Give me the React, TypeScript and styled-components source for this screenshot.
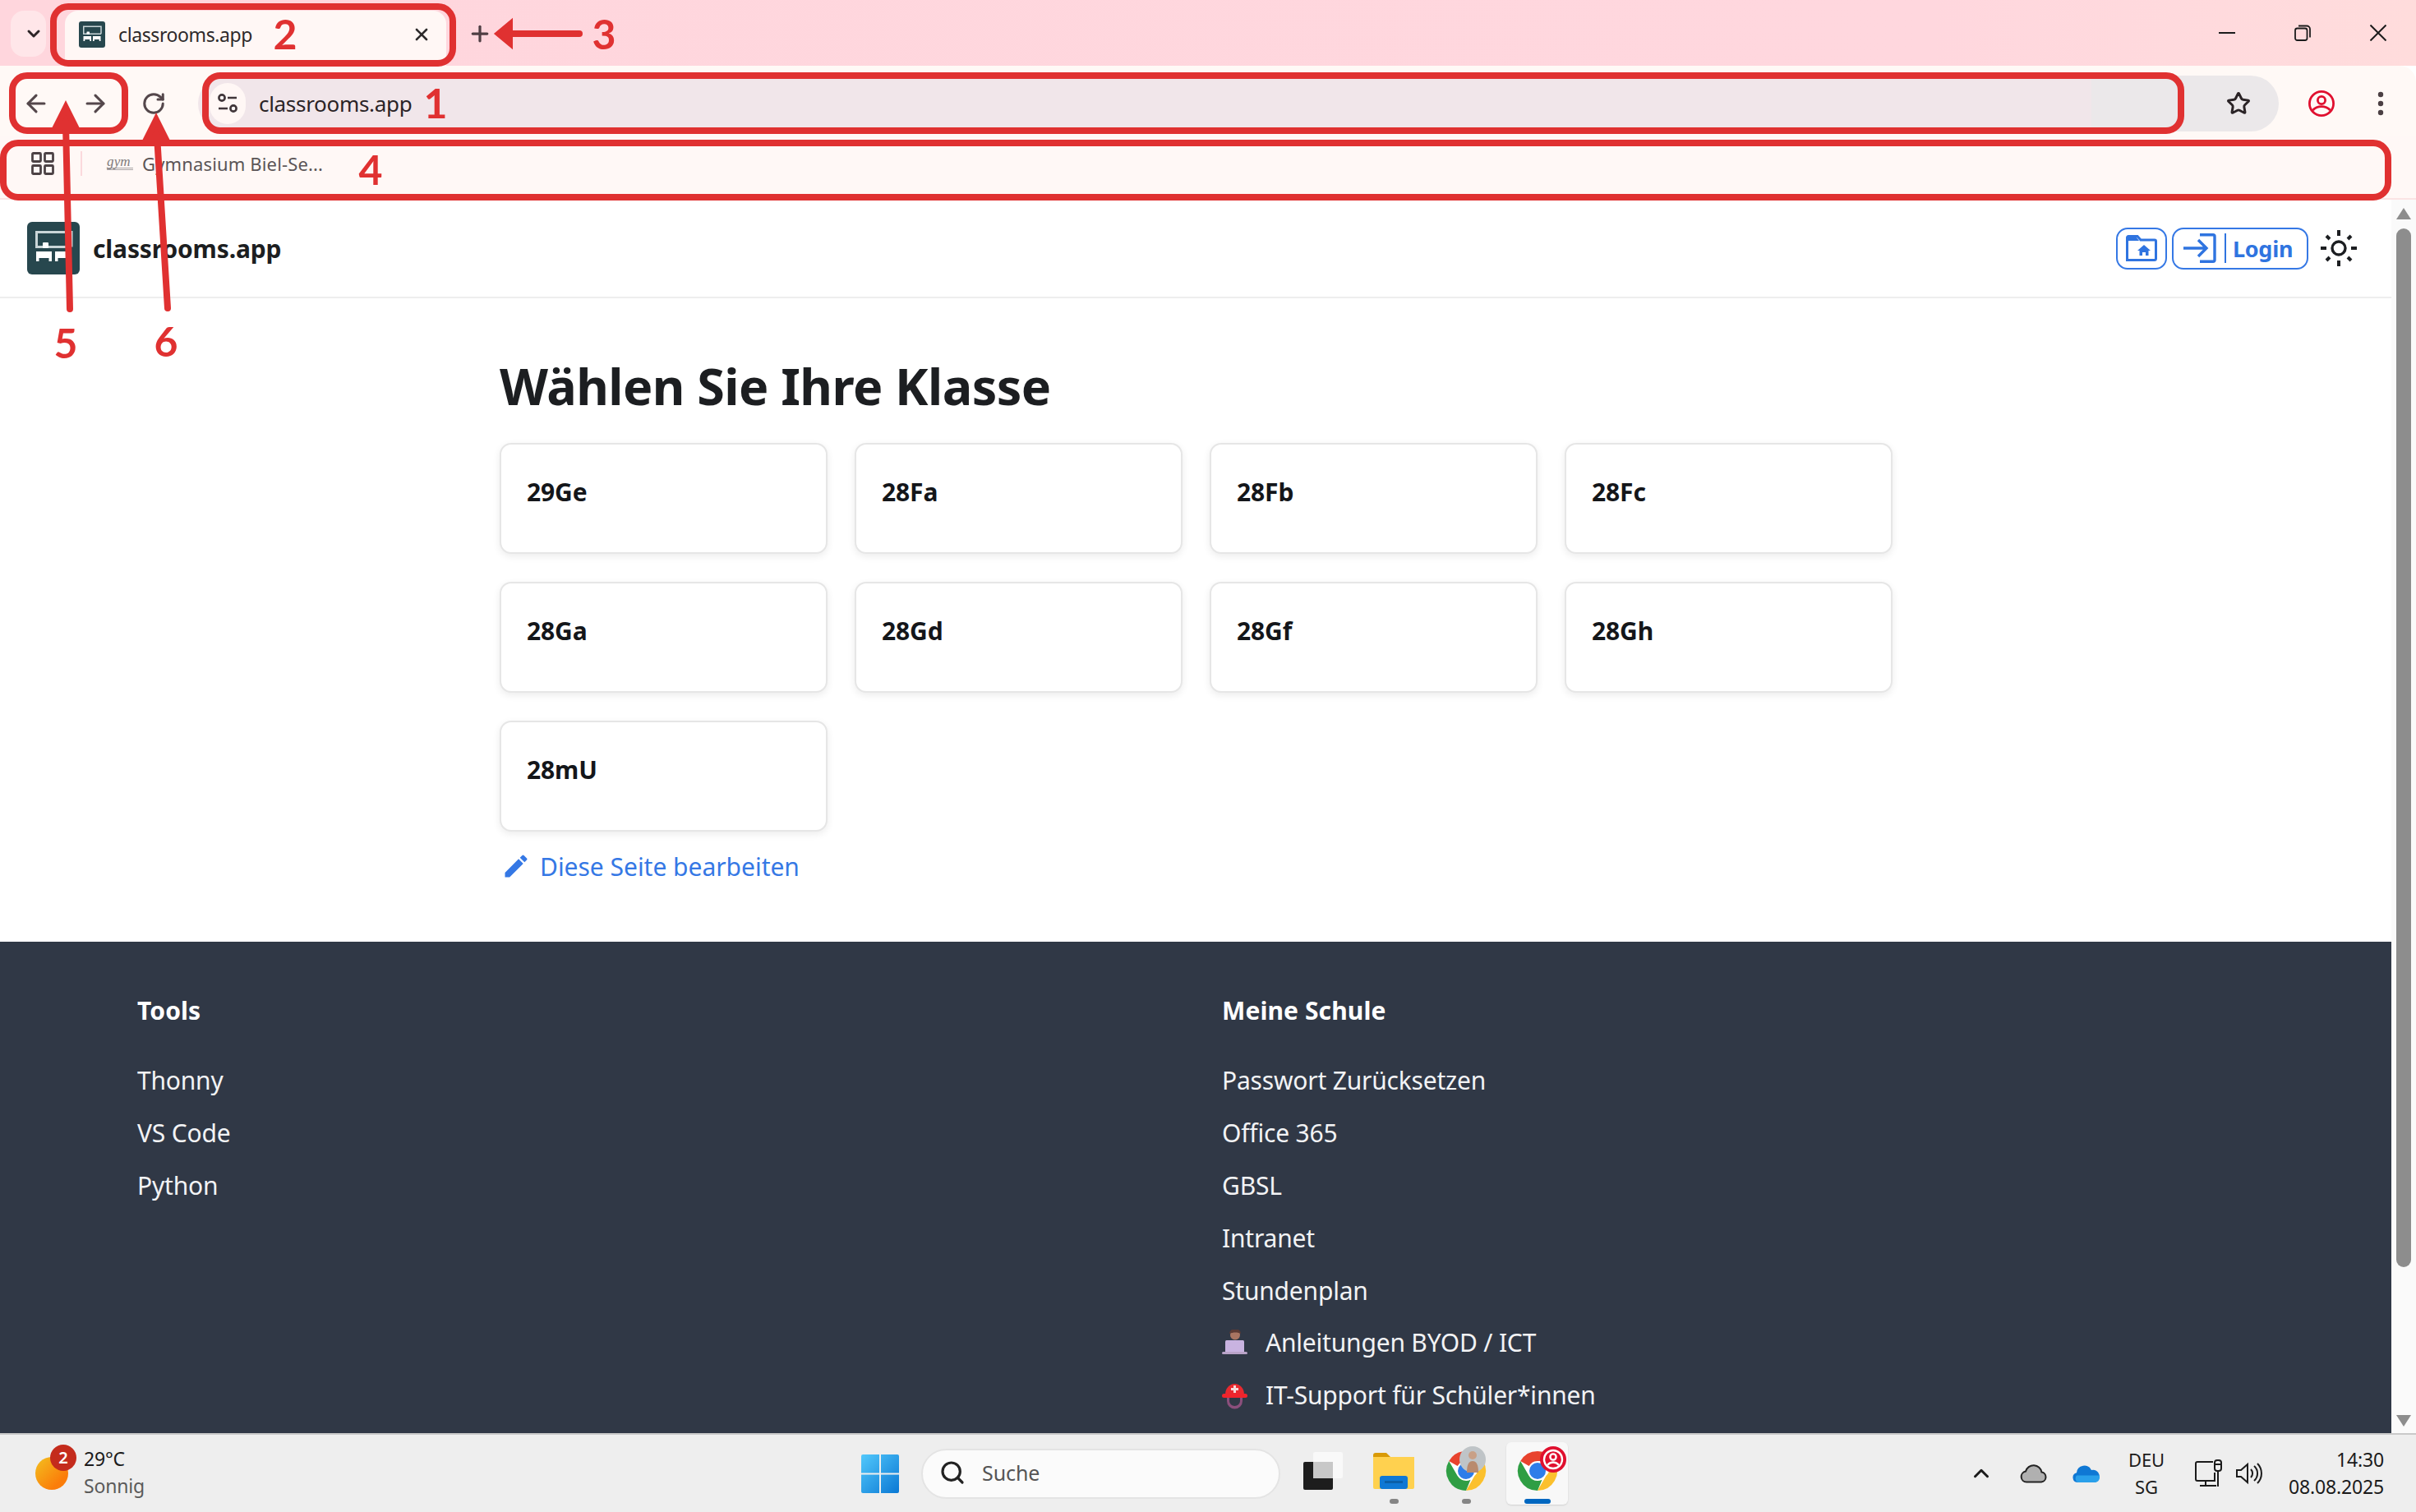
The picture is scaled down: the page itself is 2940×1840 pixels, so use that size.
import * as React from "react";
import styled, { createGlobalStyle } from "styled-components";
import {
  ArrowLeft,
  ArrowRight,
  ChevronDown,
  ChevronUp,
  Plus,
  RotateCw,
  Search,
  Star,
  X,
} from "lucide-react";
import { MdEdit } from "react-icons/md";

const Global = createGlobalStyle`
  html, body {
    margin: 0;
    padding: 0;
    background: #fff;
  }
  * { box-sizing: border-box; }
`;

const Screen = styled.div`
  position: relative;
  width: 2940px;
  height: 1840px;
  display: flex;
  flex-direction: column;
  overflow: hidden;
  font-family: "Noto Sans", "Open Sans", sans-serif;
`;

/* browser chrome */
const TabStrip = styled.div`
  height: 80px;
  flex: none;
  display: flex;
  align-items: flex-start;
  padding: 13px 36px 0 13px;
  background: linear-gradient(90deg, #ffd6dd 0%, #ffd7de 80%, #ffdcdc 100%);
`;

const TabMenu = styled.div`
  width: 43px;
  height: 56px;
  flex: none;
  padding-left: 12px;
  border-radius: 16px;
  background: #ffe6e9;
  color: #2c2426;
  display: flex;
  align-items: center;
  justify-content: center;
`;

const Tab = styled.div`
  width: 464px;
  height: 67px;
  margin-left: 23px;
  flex: none;
  display: flex;
  align-items: center;
  padding: 0 18px 10px 17px;
  border-radius: 16px 16px 0 0;
  background: #fff7f5;
  color: #2d2a2b;
  font-size: 23px;
  letter-spacing: -0.4px;
`;

const TabTitle = styled.span`
  margin-left: 16px;
  flex: 1;
`;

const NewTab = styled.div`
  margin: 13px 0 0 26px;
  color: #4f3f44;
  display: flex;
`;

const WindowControls = styled.div`
  margin: 17px 0 0 auto;
  display: flex;
  align-items: center;
  gap: 72px;
  color: #1c1c1c;
`;

const Toolbar = styled.div`
  height: 86px;
  flex: none;
  display: flex;
  align-items: center;
  background: #fff9f6;
  border-radius: 0 20px 0 0;
  padding: 6px 28px 0 27px;
  color: #54474b;
`;

const NavIcons = styled.div`
  display: flex;
  align-items: center;
  gap: 38px;
`;

const Reload = styled.div`
  display: flex;
  margin-left: 39px;
`;

const Omnibox = styled.div`
  width: 2532px;
  height: 68px;
  margin-left: 39px;
  flex: none;
  display: flex;
  align-items: center;
  padding: 0 34px 0 14px;
  border-radius: 34px;
  background: linear-gradient(90deg, #f1e6ea 0%, #f1e6ea 91%, #ebe8ea 91%);
  color: #2a2326;
  font-size: 26px;
  letter-spacing: -0.3px;
`;

const SiteInfo = styled.div`
  width: 44px;
  height: 50px;
  border-radius: 25px;
  background: #fff7f5;
  display: flex;
  align-items: center;
  justify-content: center;
  flex: none;
`;

const Address = styled.span`
  margin-left: 16px;
  flex: 1;
`;

const ToolbarEnd = styled.div`
  margin-left: 35px;
  display: flex;
  align-items: center;
  gap: 51px;
`;

const Bookmarks = styled.div`
  height: 77px;
  flex: none;
  display: flex;
  align-items: center;
  padding: 0 0 10px 38px;
  background: #fff8f6;
  border-bottom: 2px solid #fbe4e4;
  color: #5b5557;
  font-size: 22px;
  letter-spacing: 0.15px;
`;

const BarDivider = styled.div`
  width: 2px;
  height: 30px;
  margin: 0 30px 0 32px;
  background: #fbd9dc;
`;

const GymMark = styled.span`
  width: 32px;
  margin-right: 11px;
  font-family: "Liberation Serif", serif;
  font-style: italic;
  font-size: 17px;
  line-height: 14px;
  color: #807b7c;
  border-bottom: 3px double #a9a5a6;
`;

/* page */
const Viewport = styled.div`
  flex: 1;
  min-height: 0;
  display: flex;
`;

const Page = styled.div`
  flex: 1;
  min-width: 0;
  overflow: hidden;
  background: #fff;
  color: #1c1e21;
`;

const NavBar = styled.nav`
  height: 120px;
  display: flex;
  align-items: center;
  padding: 0 42px 0 33px;
  border-bottom: 2px solid #eeeeee;
`;

const Brand = styled.div`
  margin-left: 16px;
  font-size: 30px;
  font-weight: 700;
  letter-spacing: -0.15px;
  color: #1c1e21;
`;

const NavRight = styled.div`
  margin-left: auto;
  display: flex;
  align-items: center;
`;

const OutlineButton = styled.div`
  height: 51px;
  margin-right: 6px;
  display: flex;
  align-items: center;
  border: 2px solid #3578e5;
  border-radius: 14px;
  color: #2f74e0;
  font-size: 27px;
  font-weight: 700;
  letter-spacing: -0.3px;
`;

const HomeButton = styled(OutlineButton)`
  width: 62px;
  justify-content: center;
`;

const LoginButton = styled(OutlineButton)`
  width: 166px;
  padding-left: 12px;
`;

const LoginSplit = styled.span`
  width: 2px;
  height: 36px;
  margin: 0 8px 0 10px;
  background: #2f74e0;
`;

const ThemeToggle = styled.div`
  display: flex;
  margin-left: 9px;
`;

const Content = styled.main`
  height: 783px;
  padding: 68px 0 0 608px;
`;

const Heading = styled.h1`
  margin: 0;
  font-size: 61px;
  line-height: 78px;
  font-weight: 700;
  letter-spacing: -0.55px;
  color: #1c1e21;
`;

const ClassGrid = styled.div`
  margin-top: 30px;
  display: grid;
  grid-template-columns: repeat(4, 399px);
  grid-auto-rows: 135px;
  column-gap: 33px;
  row-gap: 34px;
`;

const ClassCard = styled.div`
  padding: 38px 31px;
  border: 2px solid #e6e6e6;
  border-radius: 14px;
  background: #fff;
  box-shadow: 0 3px 10px rgba(0, 0, 0, 0.08);
  font-size: 30px;
  line-height: 40px;
  font-weight: 700;
  letter-spacing: -0.1px;
  color: #14161a;
`;

const EditLink = styled.div`
  margin-top: 21px;
  padding-left: 2px;
  display: flex;
  align-items: center;
  gap: 11px;
  height: 42px;
  font-size: 30px;
  letter-spacing: -0.02px;
  color: #3578e5;
`;

const Footer = styled.footer`
  height: 600px;
  background: #303846;
  color: #f2f3f5;
  padding: 62px 0 0 167px;
  display: grid;
  grid-template-columns: 1320px 1fr;
`;

const FooterColumn = styled.div`
  display: flex;
  flex-direction: column;
`;

const FooterTitle = styled.div`
  height: 44px;
  margin-bottom: 31px;
  line-height: 44px;
  font-size: 30px;
  font-weight: 700;
  letter-spacing: 0.1px;
  color: #fff;
`;

const FooterLink = styled.div`
  height: 63.8px;
  display: flex;
  align-items: center;
  gap: 22px;
  font-size: 30px;
  letter-spacing: -0.2px;
`;

const Scrollbar = styled.div`
  width: 30px;
  flex: none;
  display: flex;
  flex-direction: column;
  align-items: center;
  background: #fafafa;
  padding-top: 10px;
`;

const ScrollThumb = styled.div`
  width: 18px;
  height: 1264px;
  margin-top: 11px;
  border-radius: 9px;
  background: #8d8d8d;
`;

const ScrollDown = styled.div`
  margin-top: auto;
  margin-bottom: 8px;
  display: flex;
`;

/* taskbar */
const Taskbar = styled.div`
  height: 96px;
  flex: none;
  display: flex;
  align-items: center;
  background: #eeeeee;
  border-top: 2px solid #c9c9c9;
  font-family: "Noto Sans", "Open Sans", sans-serif;
  color: #1b1b1b;
`;

const Weather = styled.div`
  width: 1048px;
  flex: none;
  padding-left: 43px;
  display: flex;
  align-items: center;
`;

const SunDisc = styled.div`
  position: relative;
  width: 40px;
  height: 40px;
  flex: none;
  border-radius: 50%;
  background: linear-gradient(135deg, #f3c01f 0%, #fb7d0a 75%);
`;

const WeatherBadge = styled.span`
  position: absolute;
  top: -15px;
  left: 18px;
  width: 32px;
  height: 32px;
  border-radius: 50%;
  background: #c42b1c;
  color: #fff;
  font-size: 20px;
  font-weight: 600;
  line-height: 32px;
  text-align: center;
`;

const WeatherText = styled.div`
  margin: 0 0 3px 19px;
  font-size: 23px;
  line-height: 33px;
  letter-spacing: -0.2px;
`;

const Muted = styled.div`
  color: #5a5a5a;
`;

const SearchBox = styled.div`
  width: 437px;
  height: 61px;
  margin-left: 27px;
  flex: none;
  display: flex;
  align-items: center;
  padding: 0 0 2px 20px;
  border-radius: 31px;
  border: 2px solid #e4e4e4;
  background: #fbfbfb;
  font-size: 25px;
  color: #555;
  letter-spacing: -0.1px;
`;

const SearchLabel = styled.span`
  margin-left: 20px;
`;

const AppSlot = styled.div<{ $ml: number; $active?: boolean }>`
  position: relative;
  width: ${(p) => (p.$active ? 75 : 52)}px;
  height: 76px;
  margin-left: ${(p) => p.$ml}px;
  flex: none;
  display: flex;
  align-items: center;
  justify-content: center;
  padding-bottom: 6px;
  border-radius: 6px;
  background: ${(p) => (p.$active ? "#f8f8f8" : "transparent")};
  box-shadow: ${(p) => (p.$active ? "0 1px 2px rgba(0,0,0,.12)" : "none")};
`;

const RunDot = styled.span`
  position: absolute;
  bottom: 1px;
  left: 50%;
  width: 11px;
  height: 6px;
  margin-left: -5px;
  border-radius: 3px;
  background: #858585;
`;

const ActiveBar = styled.span`
  position: absolute;
  bottom: 1px;
  left: 22px;
  width: 32px;
  height: 6px;
  border-radius: 3px;
  background: #0067c0;
`;

const AppBadge = styled.span`
  position: absolute;
  top: 5px;
  right: 2px;
  display: flex;
`;

const Tray = styled.div`
  margin-left: auto;
  padding-right: 39px;
  display: flex;
  align-items: center;
`;

const TrayItem = styled.div<{ $ml: number }>`
  margin-left: ${(p) => p.$ml}px;
  display: flex;
  align-items: center;
`;

const TrayLang = styled.div`
  margin-left: 33px;
  width: 48px;
  font-size: 22px;
  line-height: 33px;
  text-align: center;
  letter-spacing: -0.2px;
`;

const Clock = styled.div`
  margin-left: 32px;
  font-size: 23px;
  line-height: 33px;
  text-align: right;
  letter-spacing: -0.15px;
`;

/* red markup drawn over the screenshot */
const MarkBox = styled.div<{ $x: number; $y: number; $w: number; $h: number }>`
  position: absolute;
  left: ${(p) => p.$x}px;
  top: ${(p) => p.$y}px;
  width: ${(p) => p.$w}px;
  height: ${(p) => p.$h}px;
  border: 8px solid #e03131;
  border-radius: 22px;
  pointer-events: none;
`;

const MarkDigit = styled.span<{ $x: number; $y: number }>`
  position: absolute;
  left: ${(p) => p.$x}px;
  top: ${(p) => p.$y}px;
  width: 40px;
  margin: -30px 0 0 -20px;
  font-family: "Lato", sans-serif;
  font-size: 50px;
  line-height: 60px;
  font-weight: 700;
  text-align: center;
  color: #e03131;
`;

const MarkArrows = styled.svg`
  position: absolute;
  left: 0;
  top: 0;
  pointer-events: none;
`;

const AppLogo = ({ size }: { size: number }) => (
  <svg width={size} height={size} viewBox="0 0 64 64" style={{ flex: "none" }}>
    <rect width="64" height="64" rx="6" fill="#27474e" />
    <path d="M54 30.500H11.500V12.500H54V30.500" fill="none" stroke="#c9d5d7" strokeWidth="3" />
    <rect x="19" y="25" width="7" height="7" rx="1" fill="#fff" />
    <path d="M11 36h19v12h-3.500v-4h-12v4H11zM34 36h19v12h-3.500v-4h-12v4H34z" fill="#fff" />
  </svg>
);

const TuneIcon = () => (
  <svg width="26" height="26" viewBox="0 0 26 26" fill="none" stroke="#40363a" strokeWidth="2.6">
    <circle cx="6" cy="6" r="3.6" />
    <path d="M13 6h11M2 19h11" />
    <circle cx="20" cy="19" r="3.6" />
  </svg>
);

const ProfileIcon = () => (
  <svg width="34" height="34" viewBox="0 0 34 34" fill="none" stroke="#e0102f" strokeWidth="2.8">
    <circle cx="17" cy="17" r="14.6" />
    <circle cx="17" cy="13" r="4.6" />
    <path d="M6.5 25c3-3.4 6.6-4.4 10.5-4.4S24.500 21.600 27.500 25" />
  </svg>
);

const KebabIcon = () => (
  <svg width="8" height="30" viewBox="0 0 8 30" fill="#4b3f43">
    <circle cx="4" cy="4" r="3.2" />
    <circle cx="4" cy="15" r="3.2" />
    <circle cx="4" cy="26" r="3.2" />
  </svg>
);

const MinimizeIcon = () => (
  <svg width="20" height="20" viewBox="0 0 20 20" stroke="#1c1c1c" strokeWidth="2">
    <path d="M0 10h20" />
  </svg>
);

const RestoreIcon = () => (
  <svg width="20" height="20" viewBox="0 0 20 20" fill="none" stroke="#1c1c1c" strokeWidth="1.8">
    <rect x="1" y="4.500" width="14.500" height="14.500" rx="2.500" />
    <path d="M5 1.500h10a4 4 0 0 1 4 4v10" />
  </svg>
);

const CloseIcon = () => (
  <svg width="20" height="20" viewBox="0 0 20 20" stroke="#1c1c1c" strokeWidth="2">
    <path d="M0.500 0.500l19 19M19.500 0.500l-19 19" />
  </svg>
);

const AppsIcon = () => (
  <svg width="28" height="28" viewBox="0 0 28 28" fill="none" stroke="#4c4245" strokeWidth="2.800">
    <rect x="1.500" y="1.500" width="10" height="10" rx="1" />
    <rect x="16.500" y="1.500" width="10" height="10" rx="1" />
    <rect x="1.500" y="16.500" width="10" height="10" rx="1" />
    <rect x="16.500" y="16.500" width="10" height="10" rx="1" />
  </svg>
);

const FolderHomeIcon = () => (
  <svg width="38" height="32" viewBox="0 0 38 32">
    <path
      d="M1.500 30.500V3a1.500 1.500 0 0 1 1.500-1.500h11L18 6h17a1.500 1.500 0 0 1 1.500 1.500v21a2 2 0 0 1-2 2z"
      fill="none"
      stroke="#2f74e0"
      strokeWidth="3"
    />
    <path d="M3 3h10l3 4H3z" fill="#2f74e0" />
    <path d="M22 12l8 7h-2.500v6h-3.500v-4h-4v4h-3.500v-6H14z" fill="#2f74e0" />
  </svg>
);

const LoginIcon = () => (
  <svg width="40" height="36" viewBox="0 0 40 36" fill="none" stroke="#2f74e0" strokeWidth="3.400">
    <path d="M20 1.700h16a2 2 0 0 1 2 2v28.600a2 2 0 0 1-2 2H20" />
    <path d="M0 18h28M18 8l10 10-10 10" />
  </svg>
);

const SunIcon = () => (
  <svg width="44" height="44" viewBox="0 0 44 44" fill="none" stroke="#1c1e21">
    <circle cx="22" cy="22" r="8" strokeWidth="3.400" />
    <path d="M22 0v7M22 37v7M0 22h7M37 22h7M7 7l4 4M33 33l4 4M37 7l-4 4M11 33l-4 4" strokeWidth="4" />
  </svg>
);

const ScrollTriangle = ({ up }: { up?: boolean }) => (
  <svg width="18" height="14" viewBox="0 0 18 14" fill="#8d8d8d">
    <path d={up ? "M9 0l9 14H0z" : "M0 0h18L9 14z"} />
  </svg>
);

const LaptopEmoji = () => (
  <svg width="31" height="32" viewBox="0 0 31 32">
    <circle cx="16" cy="6.500" r="6" fill="#a97562" />
    <path d="M9 5a7 6 0 0 1 14 0c-3-2-10-2-14 0z" fill="#5b3a34" />
    <path d="M8 14h16v4H8z" fill="#74508a" />
    <rect x="4" y="13" width="23" height="15" rx="1.500" fill="#c9b3e0" />
    <rect x="0" y="27" width="31" height="3" rx="1.500" fill="#b9a3c8" />
  </svg>
);

const HelmetEmoji = () => (
  <svg width="31" height="34" viewBox="0 0 31 34">
    <path d="M6 18v6a9.500 9.500 0 0 0 19 0v-6h-3v6a6.500 6 0 0 1-13 0v-6z" fill="#8b4f7c" />
    <path d="M4 16a11.500 13 0 0 1 23 0z" fill="#e8292f" />
    <rect x="0" y="15" width="31" height="5" rx="2.500" fill="#f0242c" />
    <path d="M14 5h3v3h3v3h-3v3h-3v-3h-3V8h3z" fill="#f6d9d9" />
  </svg>
);

const WindowsIcon = () => (
  <svg width="46" height="47" viewBox="0 0 46 47" style={{ flex: "none" }}>
    <defs>
      <linearGradient id="winA" x1="0" y1="0" x2="1" y2="1">
        <stop offset="0" stopColor="#52c8fb" />
        <stop offset="1" stopColor="#0a78d4" />
      </linearGradient>
    </defs>
    <path d="M0 2a2 2 0 0 1 2-2h20v22.500H0zM24 0h20a2 2 0 0 1 2 2v20.500H24zM0 24.500h22V47H2a2 2 0 0 1-2-2zM24 24.500h22V45a2 2 0 0 1-2 2H24z" fill="url(#winA)" />
  </svg>
);

const TaskViewIcon = () => (
  <svg width="48" height="46" viewBox="0 0 48 46">
    <rect x="0" y="12" width="36" height="34" rx="2" fill="#1d1d1d" />
    <rect x="12" y="0" width="36" height="32" rx="2" fill="#fafafa" opacity="0.92" />
    <rect x="12" y="12" width="24" height="20" fill="#c8c8c8" />
  </svg>
);

const ExplorerIcon = () => (
  <svg width="50" height="44" viewBox="0 0 50 44">
    <path d="M0 3a3 3 0 0 1 3-3h13l5 5H0z" fill="#d99a07" />
    <path d="M0 5h50v37a2 2 0 0 1-2 2H2a2 2 0 0 1-2-2z" fill="#ffd14f" />
    <rect x="8" y="28" width="34" height="16" rx="3" fill="#0f78d4" />
    <rect x="14" y="34" width="22" height="3" fill="#0a5fa8" />
  </svg>
);

const ChromeIcon = () => (
  <svg width="50" height="50" viewBox="0 0 50 50">
    <circle cx="25" cy="25" r="24" fill="#fff" />
    <path d="M25 1a24 24 0 0 1 20.800 12H25a12 12 0 0 0-10.400 6L4.200 13A24 24 0 0 1 25 1z" fill="#e8432e" />
    <path d="M45.800 13A24 24 0 0 1 25 49l10.400-18a12 12 0 0 0 0-18z" fill="#fbc02d" />
    <path d="M4.200 13l10.400 18A12 12 0 0 0 25 37a12 12 0 0 0 5.500-1.200L25 49A24 24 0 0 1 4.200 13z" fill="#2f9e44" />
    <circle cx="25" cy="25" r="10" fill="#2e7de9" />
  </svg>
);

const AvatarBadge = () => (
  <svg width="32" height="32" viewBox="0 0 32 32">
    <circle cx="16" cy="16" r="16" fill="#bfc4c7" />
    <path d="M9 32c0-9 2-14 7-14s7 5 7 14z" fill="#b98a6e" />
    <circle cx="16" cy="11" r="5" fill="#c9a086" />
  </svg>
);

const RedProfileBadge = () => (
  <svg width="32" height="32" viewBox="0 0 32 32" fill="none" stroke="#fff" strokeWidth="2.400">
    <circle cx="16" cy="16" r="16" fill="#e0102f" stroke="none" />
    <circle cx="16" cy="16" r="11" />
    <circle cx="16" cy="13" r="3.600" />
    <path d="M9 23c2-2.500 4.500-3.500 7-3.500s5 1 7 3.500" />
  </svg>
);

const CloudIcon = () => (
  <svg width="34" height="24" viewBox="0 0 34 24">
    <path d="M8 22.500a6.500 6.500 0 0 1-1-12.900 10 10 0 0 1 19.500 1A6 6 0 0 1 26 22.500z" fill="#b0b0b0" stroke="#222" strokeWidth="2" />
  </svg>
);

const OneDriveIcon = () => (
  <svg width="33" height="22" viewBox="0 0 33 22">
    <path d="M6 22a6 6 0 0 1-1-11.800A9.500 9.500 0 0 1 23 7a7.500 7.500 0 0 1 4 15z" fill="#0f78d4" />
    <path d="M6 22h21a6 6 0 0 0 5.500-8.500H5A6 6 0 0 0 6 22z" fill="#2aa0ea" />
  </svg>
);

const NetworkIcon = () => (
  <svg width="33" height="34" viewBox="0 0 33 34" fill="none" stroke="#1b1b1b" strokeWidth="2">
    <path d="M22 3H3a2 2 0 0 0-2 2v19a2 2 0 0 0 2 2h21V16" />
    <path d="M13 26v6M6 32h20" />
    <rect x="24" y="1" width="8" height="13" rx="3" />
    <path d="M24 6h8M28 14v19" />
  </svg>
);

const VolumeIcon = () => (
  <svg width="32" height="28" viewBox="0 0 32 28" fill="none" stroke="#1b1b1b" strokeWidth="2">
    <path d="M1 10v8h5l8 7V3L6 10z" />
    <path d="M18 9a7 7 0 0 1 0 10M22 5a12 12 0 0 1 0 18M26 2a17 17 0 0 1 0 24" />
  </svg>
);

const classes = ["29Ge", "28Fa", "28Fb", "28Fc", "28Ga", "28Gd", "28Gf", "28Gh", "28mU"];
const tools = ["Thonny", "VS Code", "Python"];
const school = ["Passwort Zurücksetzen", "Office 365", "GBSL", "Intranet", "Stundenplan"];

const App: React.FunctionComponent = () => {
  return (
    <Screen>
      <Global />

      <TabStrip>
        <TabMenu>
          <ChevronDown size={24} strokeWidth={3} />
        </TabMenu>
        <Tab>
          <AppLogo size={32} />
          <TabTitle>classrooms.app</TabTitle>
          <X size={24} strokeWidth={2.6} />
        </Tab>
        <NewTab>
          <Plus size={30} strokeWidth={2.6} />
        </NewTab>
        <WindowControls>
          <MinimizeIcon />
          <RestoreIcon />
          <CloseIcon />
        </WindowControls>
      </TabStrip>

      <Toolbar>
        <NavIcons>
          <ArrowLeft size={34} strokeWidth={2.2} />
          <ArrowRight size={34} strokeWidth={2.2} />
        </NavIcons>
        <Reload>
          <RotateCw size={30} strokeWidth={2.4} />
        </Reload>
        <Omnibox>
          <SiteInfo>
            <TuneIcon />
          </SiteInfo>
          <Address>classrooms.app</Address>
          <Star size={30} strokeWidth={2.4} />
        </Omnibox>
        <ToolbarEnd>
          <ProfileIcon />
          <KebabIcon />
        </ToolbarEnd>
      </Toolbar>

      <Bookmarks>
        <AppsIcon />
        <BarDivider />
        <GymMark>gym</GymMark>
        Gymnasium Biel-Se...
      </Bookmarks>

      <Viewport>
        <Page>
          <NavBar>
            <AppLogo size={64} />
            <Brand>classrooms.app</Brand>
            <NavRight>
              <HomeButton>
                <FolderHomeIcon />
              </HomeButton>
              <LoginButton>
                <LoginIcon />
                <LoginSplit />
                Login
              </LoginButton>
              <ThemeToggle>
                <SunIcon />
              </ThemeToggle>
            </NavRight>
          </NavBar>

          <Content>
            <Heading>Wählen Sie Ihre Klasse</Heading>
            <ClassGrid>
              {classes.map((name) => (
                <ClassCard key={name}>{name}</ClassCard>
              ))}
            </ClassGrid>
            <EditLink>
              <MdEdit size={36} />
              Diese Seite bearbeiten
            </EditLink>
          </Content>

          <Footer>
            <FooterColumn>
              <FooterTitle>Tools</FooterTitle>
              {tools.map((name) => (
                <FooterLink key={name}>{name}</FooterLink>
              ))}
            </FooterColumn>
            <FooterColumn>
              <FooterTitle>Meine Schule</FooterTitle>
              {school.map((name) => (
                <FooterLink key={name}>{name}</FooterLink>
              ))}
              <FooterLink>
                <LaptopEmoji />
                Anleitungen BYOD / ICT
              </FooterLink>
              <FooterLink>
                <HelmetEmoji />
                IT-Support für Schüler*innen
              </FooterLink>
            </FooterColumn>
          </Footer>
        </Page>

        <Scrollbar>
          <ScrollTriangle up />
          <ScrollThumb />
          <ScrollDown>
            <ScrollTriangle />
          </ScrollDown>
        </Scrollbar>
      </Viewport>

      <Taskbar>
        <Weather>
          <SunDisc>
            <WeatherBadge>2</WeatherBadge>
          </SunDisc>
          <WeatherText>
            29°C
            <Muted>Sonnig</Muted>
          </WeatherText>
        </Weather>
        <WindowsIcon />
        <SearchBox>
          <Search size={32} strokeWidth={2.4} color="#222" />
          <SearchLabel>Suche</SearchLabel>
        </SearchBox>
        <AppSlot $ml={26}>
          <TaskViewIcon />
        </AppSlot>
        <AppSlot $ml={34}>
          <ExplorerIcon />
          <RunDot />
        </AppSlot>
        <AppSlot $ml={36}>
          <ChromeIcon />
          <AppBadge>
            <AvatarBadge />
          </AppBadge>
          <RunDot />
        </AppSlot>
        <AppSlot $ml={23} $active>
          <ChromeIcon />
          <AppBadge>
            <RedProfileBadge />
          </AppBadge>
          <ActiveBar />
        </AppSlot>

        <Tray>
          <ChevronUp size={30} strokeWidth={2.4} />
          <TrayItem $ml={32}>
            <CloudIcon />
          </TrayItem>
          <TrayItem $ml={30}>
            <OneDriveIcon />
          </TrayItem>
          <TrayLang>
            DEU
            <br />
            SG
          </TrayLang>
          <TrayItem $ml={35}>
            <NetworkIcon />
          </TrayItem>
          <TrayItem $ml={17}>
            <VolumeIcon />
          </TrayItem>
          <Clock>
            14:30
            <br />
            08.08.2025
          </Clock>
        </Tray>
      </Taskbar>

      <MarkBox $x={61} $y={4} $w={494} $h={77} />
      <MarkBox $x={246} $y={88} $w={2412} $h={75} />
      <MarkBox $x={11} $y={88} $w={145} $h={75} />
      <MarkBox $x={0} $y={170} $w={2910} $h={74} />

      <MarkArrows width="2940" height="1840" viewBox="0 0 2940 1840" fill="none" stroke="#e03131" strokeWidth="8" strokeLinecap="round">
        <path d="M616 41H705" />
        <path d="M604 41l18-15v30z" fill="#e03131" strokeWidth="4" />
        <path d="M85 376L80 150" />
        <path d="M80 131l-11 22h22z" fill="#e03131" />
        <path d="M204 375L191 165" />
        <path d="M190 146l-11 22h22z" fill="#e03131" />
      </MarkArrows>

      <MarkDigit $x={530} $y={125}>1</MarkDigit>
      <MarkDigit $x={347} $y={41}>2</MarkDigit>
      <MarkDigit $x={735} $y={41}>3</MarkDigit>
      <MarkDigit $x={451} $y={206}>4</MarkDigit>
      <MarkDigit $x={80} $y={417}>5</MarkDigit>
      <MarkDigit $x={202} $y={415}>6</MarkDigit>
    </Screen>
  );
};

export default App;
